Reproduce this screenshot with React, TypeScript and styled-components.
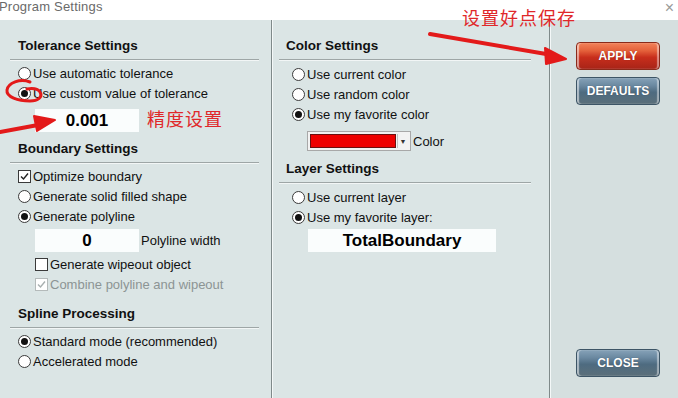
import styled, { createGlobalStyle } from 'styled-components';

const Global = createGlobalStyle`
  html, body { margin: 0; padding: 0; background: #fff; }
  body { font-family: "Liberation Sans", Arial, sans-serif; }
`;

const Window = styled.div`
  position: relative;
  width: 678px;
  height: 398px;
  overflow: hidden;
  background: #fff;
  display: flex;
  flex-direction: column;
`;

const TitleBar = styled.div`
  height: 20px;
  flex-shrink: 0;
  display: flex;
  align-items: flex-start;
  justify-content: space-between;
  background: #fff;
`;

const TitleText = styled.span`
  margin-left: -1px;
  margin-top: -1px;
  font-size: 13px;
  line-height: 15px;
  color: #6a6a6a;
  letter-spacing: 0.2px;
`;

const CloseX = styled.span`
  margin-right: 4px;
  margin-top: 0;
  font-size: 16px;
  line-height: 16px;
  color: #9a9a9a;
`;

const Body = styled.div`
  flex: 1;
  display: flex;
  background: #dbe5e5;
`;

const Panel = styled.div<{ $w: number }>`
  width: ${(p) => p.$w}px;
  flex-shrink: 0;
  box-sizing: border-box;
  border-right: 1px solid #7f8a8a;
  box-shadow: 1px 0 0 #f4f8f8;
  padding-top: 18px;
`;

const Side = styled.div`
  flex: 1;
  margin-left: 1px;
  background: #d5dfdf;
  display: flex;
  flex-direction: column;
  align-items: flex-start;
  padding: 22px 0 0 25px;
  gap: 7px;
`;

const Heading = styled.div<{ $x: number; $top?: number }>`
  font-weight: bold;
  font-size: 13.5px;
  line-height: 16px;
  color: #111;
  padding-left: ${(p) => p.$x}px;
  margin-top: ${(p) => p.$top ?? 0}px;
`;

const Rule = styled.div<{ $l?: number; $r?: number }>`
  margin: 5px ${(p) => p.$r ?? 12}px 2px ${(p) => p.$l ?? 10}px;
  height: 1px;
  background: #9ea6a6;
  border-bottom: 1px solid #f2f6f6;
`;

const Row = styled.div<{ $x: number; $dim?: boolean; $top?: number }>`
  height: 20px;
  display: flex;
  align-items: center;
  padding-left: ${(p) => p.$x}px;
  margin-top: ${(p) => p.$top ?? 0}px;
  font-size: 13px;
  color: ${(p) => (p.$dim ? '#8c9494' : '#111')};
  gap: 2px;
`;

const Radio = styled.span<{ $on?: boolean }>`
  width: 13px;
  height: 13px;
  flex-shrink: 0;
  box-sizing: border-box;
  border-radius: 50%;
  border: 1px solid #3a3a3a;
  background: #fff;
  display: flex;
  align-items: center;
  justify-content: center;
  &::after {
    content: '';
    width: 7px;
    height: 7px;
    border-radius: 50%;
    background: ${(p) => (p.$on ? '#111' : 'transparent')};
  }
`;

const Check = styled.span<{ $dim?: boolean }>`
  width: 13px;
  height: 13px;
  flex-shrink: 0;
  box-sizing: border-box;
  border: 1px solid ${(p) => (p.$dim ? '#b4baba' : '#3a3a3a')};
  background: #fff;
  display: flex;
  align-items: center;
  justify-content: center;
`;

const InputLine = styled.div<{ $x: number; $top: number }>`
  display: flex;
  align-items: center;
  padding-left: ${(p) => p.$x}px;
  margin-top: ${(p) => p.$top}px;
  gap: 2px;
  font-size: 13px;
  color: #111;
`;

const ValueBox = styled.div<{ $w: number }>`
  width: ${(p) => p.$w}px;
  height: 23px;
  background: #fafdfd;
  display: flex;
  align-items: center;
  justify-content: center;
  font-weight: bold;
  font-size: 17px;
  color: #000;
`;

const Combo = styled.div`
  width: 104px;
  height: 20px;
  box-sizing: border-box;
  background: #f2f2f2;
  border: 1px solid #a8a8a8;
  display: flex;
  align-items: center;
  padding: 2px;
  gap: 1px;
`;

const Swatch = styled.div`
  flex: 1;
  height: 100%;
  background: #ee0000;
  border: 1px solid #6a1010;
  box-sizing: border-box;
`;

const DropBtn = styled.div`
  width: 10px;
  height: 100%;
  border-left: 1px solid #c0c0c0;
  display: flex;
  align-items: center;
  justify-content: center;
  font-size: 7px;
  color: #333;
`;

const Button = styled.div<{ $kind: 'red' | 'blue'; $top?: number }>`
  width: 84px;
  height: 28px;
  box-sizing: border-box;
  margin-top: ${(p) => p.$top ?? 0}px;
  border-radius: 4px;
  display: flex;
  align-items: center;
  justify-content: center;
  font-weight: bold;
  font-size: 12px;
  color: #fff;
  text-shadow: 0 0 1px rgba(0, 0, 0, 0.4);
  border: 1px solid ${(p) => (p.$kind === 'red' ? '#8a2a1a' : '#3d5566')};
  background: ${(p) =>
    p.$kind === 'red'
      ? 'linear-gradient(#f2825a 0%, #e4603a 30%, #c82e1c 55%, #a82418 100%)'
      : 'linear-gradient(#86a2b8 0%, #6a88a0 30%, #4e6b80 55%, #5b6f7a 100%)'};
  box-shadow: inset 2px 0 1px rgba(255, 255, 255, 0.55), inset -2px 0 1px rgba(255, 255, 255, 0.45);
`;

const Note = styled.span<{ $x: number; $y: number }>`
  position: absolute;
  left: ${(p) => p.$x}px;
  top: ${(p) => p.$y}px;
  font-family: "Noto Sans CJK SC", sans-serif;
  font-size: 18px;
  line-height: 22px;
  color: #e0282a;
  letter-spacing: 1px;
`;

const Overlay = styled.svg`
  position: absolute;
  left: 0;
  top: 0;
  pointer-events: none;
`;

const CheckMark = ({ dim }: { dim?: boolean }) => (
  <svg width="9" height="9" viewBox="0 0 9 9">
    <path d="M1 4.5 L3.5 7 L8 1.5" fill="none" stroke={dim ? '#a8b0b0' : '#222'} strokeWidth="1.4" />
  </svg>
);

export default function App() {
  return (
    <>
      <Global />
      <Window>
        <TitleBar>
          <TitleText>Program Settings</TitleText>
          <CloseX>×</CloseX>
        </TitleBar>
        <Body>
          <Panel $w={272}>
            <Heading $x={18}>Tolerance Settings</Heading>
            <Rule />
            <Row $x={18}><Radio />Use automatic tolerance</Row>
            <Row $x={18}><Radio $on />Use custom value of tolerance</Row>
            <InputLine $x={35} $top={6}><ValueBox $w={104}>0.001</ValueBox></InputLine>

            <Heading $x={18} $top={9}>Boundary Settings</Heading>
            <Rule />
            <Row $x={18} $top={1}><Check><CheckMark /></Check>Optimize boundary</Row>
            <Row $x={18}><Radio />Generate solid filled shape</Row>
            <Row $x={18}><Radio $on />Generate polyline</Row>
            <InputLine $x={35} $top={3}><ValueBox $w={104}>0</ValueBox>Polyline width</InputLine>
            <Row $x={35} $top={2}><Check />Generate wipeout object</Row>
            <Row $x={35} $dim><Check $dim><CheckMark dim /></Check>Combine polyline and wipeout</Row>

            <Heading $x={18} $top={12}>Spline Processing</Heading>
            <Rule />
            <Row $x={18} $top={2}><Radio $on />Standard mode (recommended)</Row>
            <Row $x={18}><Radio />Accelerated mode</Row>
          </Panel>

          <Panel $w={278}>
            <Heading $x={14}>Color Settings</Heading>
            <Rule $l={7} $r={18} />
            <Row $x={20} $top={3}><Radio />Use current color</Row>
            <Row $x={20}><Radio />Use random color</Row>
            <Row $x={20}><Radio $on />Use my favorite color</Row>
            <InputLine $x={35} $top={7}>
              <Combo><Swatch /><DropBtn>▼</DropBtn></Combo>Color
            </InputLine>

            <Heading $x={14} $top={10}>Layer Settings</Heading>
            <Rule $l={7} $r={18} />
            <Row $x={20} $top={3}><Radio />Use current layer</Row>
            <Row $x={20}><Radio $on />Use my favorite layer:</Row>
            <InputLine $x={36} $top={2}><ValueBox $w={188}>TotalBoundary</ValueBox></InputLine>
          </Panel>

          <Side>
            <Button $kind="red">APPLY</Button>
            <Button $kind="blue">DEFAULTS</Button>
            <Button $kind="blue" $top={237}>CLOSE</Button>
          </Side>
        </Body>

        <Note $x={147} $y={107}>精度设置</Note>
        <Note $x={462} $y={6}>设置好点保存</Note>

        <Overlay width="678" height="398" viewBox="0 0 678 398">
          <path d="M430 34 L552 55" stroke="#e31a1a" strokeWidth="4" strokeLinecap="round" />
          <path d="M545 48 L566 59 L546 64 Z" fill="#e31a1a" stroke="#e31a1a" strokeWidth="2" strokeLinejoin="round" />
          <path d="M0 132 L38 125" stroke="#e31a1a" strokeWidth="4" strokeLinecap="round" />
          <path d="M34 116 L55 120 L37 131 Z" fill="#e31a1a" stroke="#e31a1a" strokeWidth="2" strokeLinejoin="round" />
          <path
            d="M30 82 C20 78 8 83 7 90 C6 97 18 101 30 101 C38 101 43 97 40 92 C38 89 33 88 27 89"
            fill="none"
            stroke="#e31a1a"
            strokeWidth="3"
            strokeLinecap="round"
          />
        </Overlay>
      </Window>
    </>
  );
}
